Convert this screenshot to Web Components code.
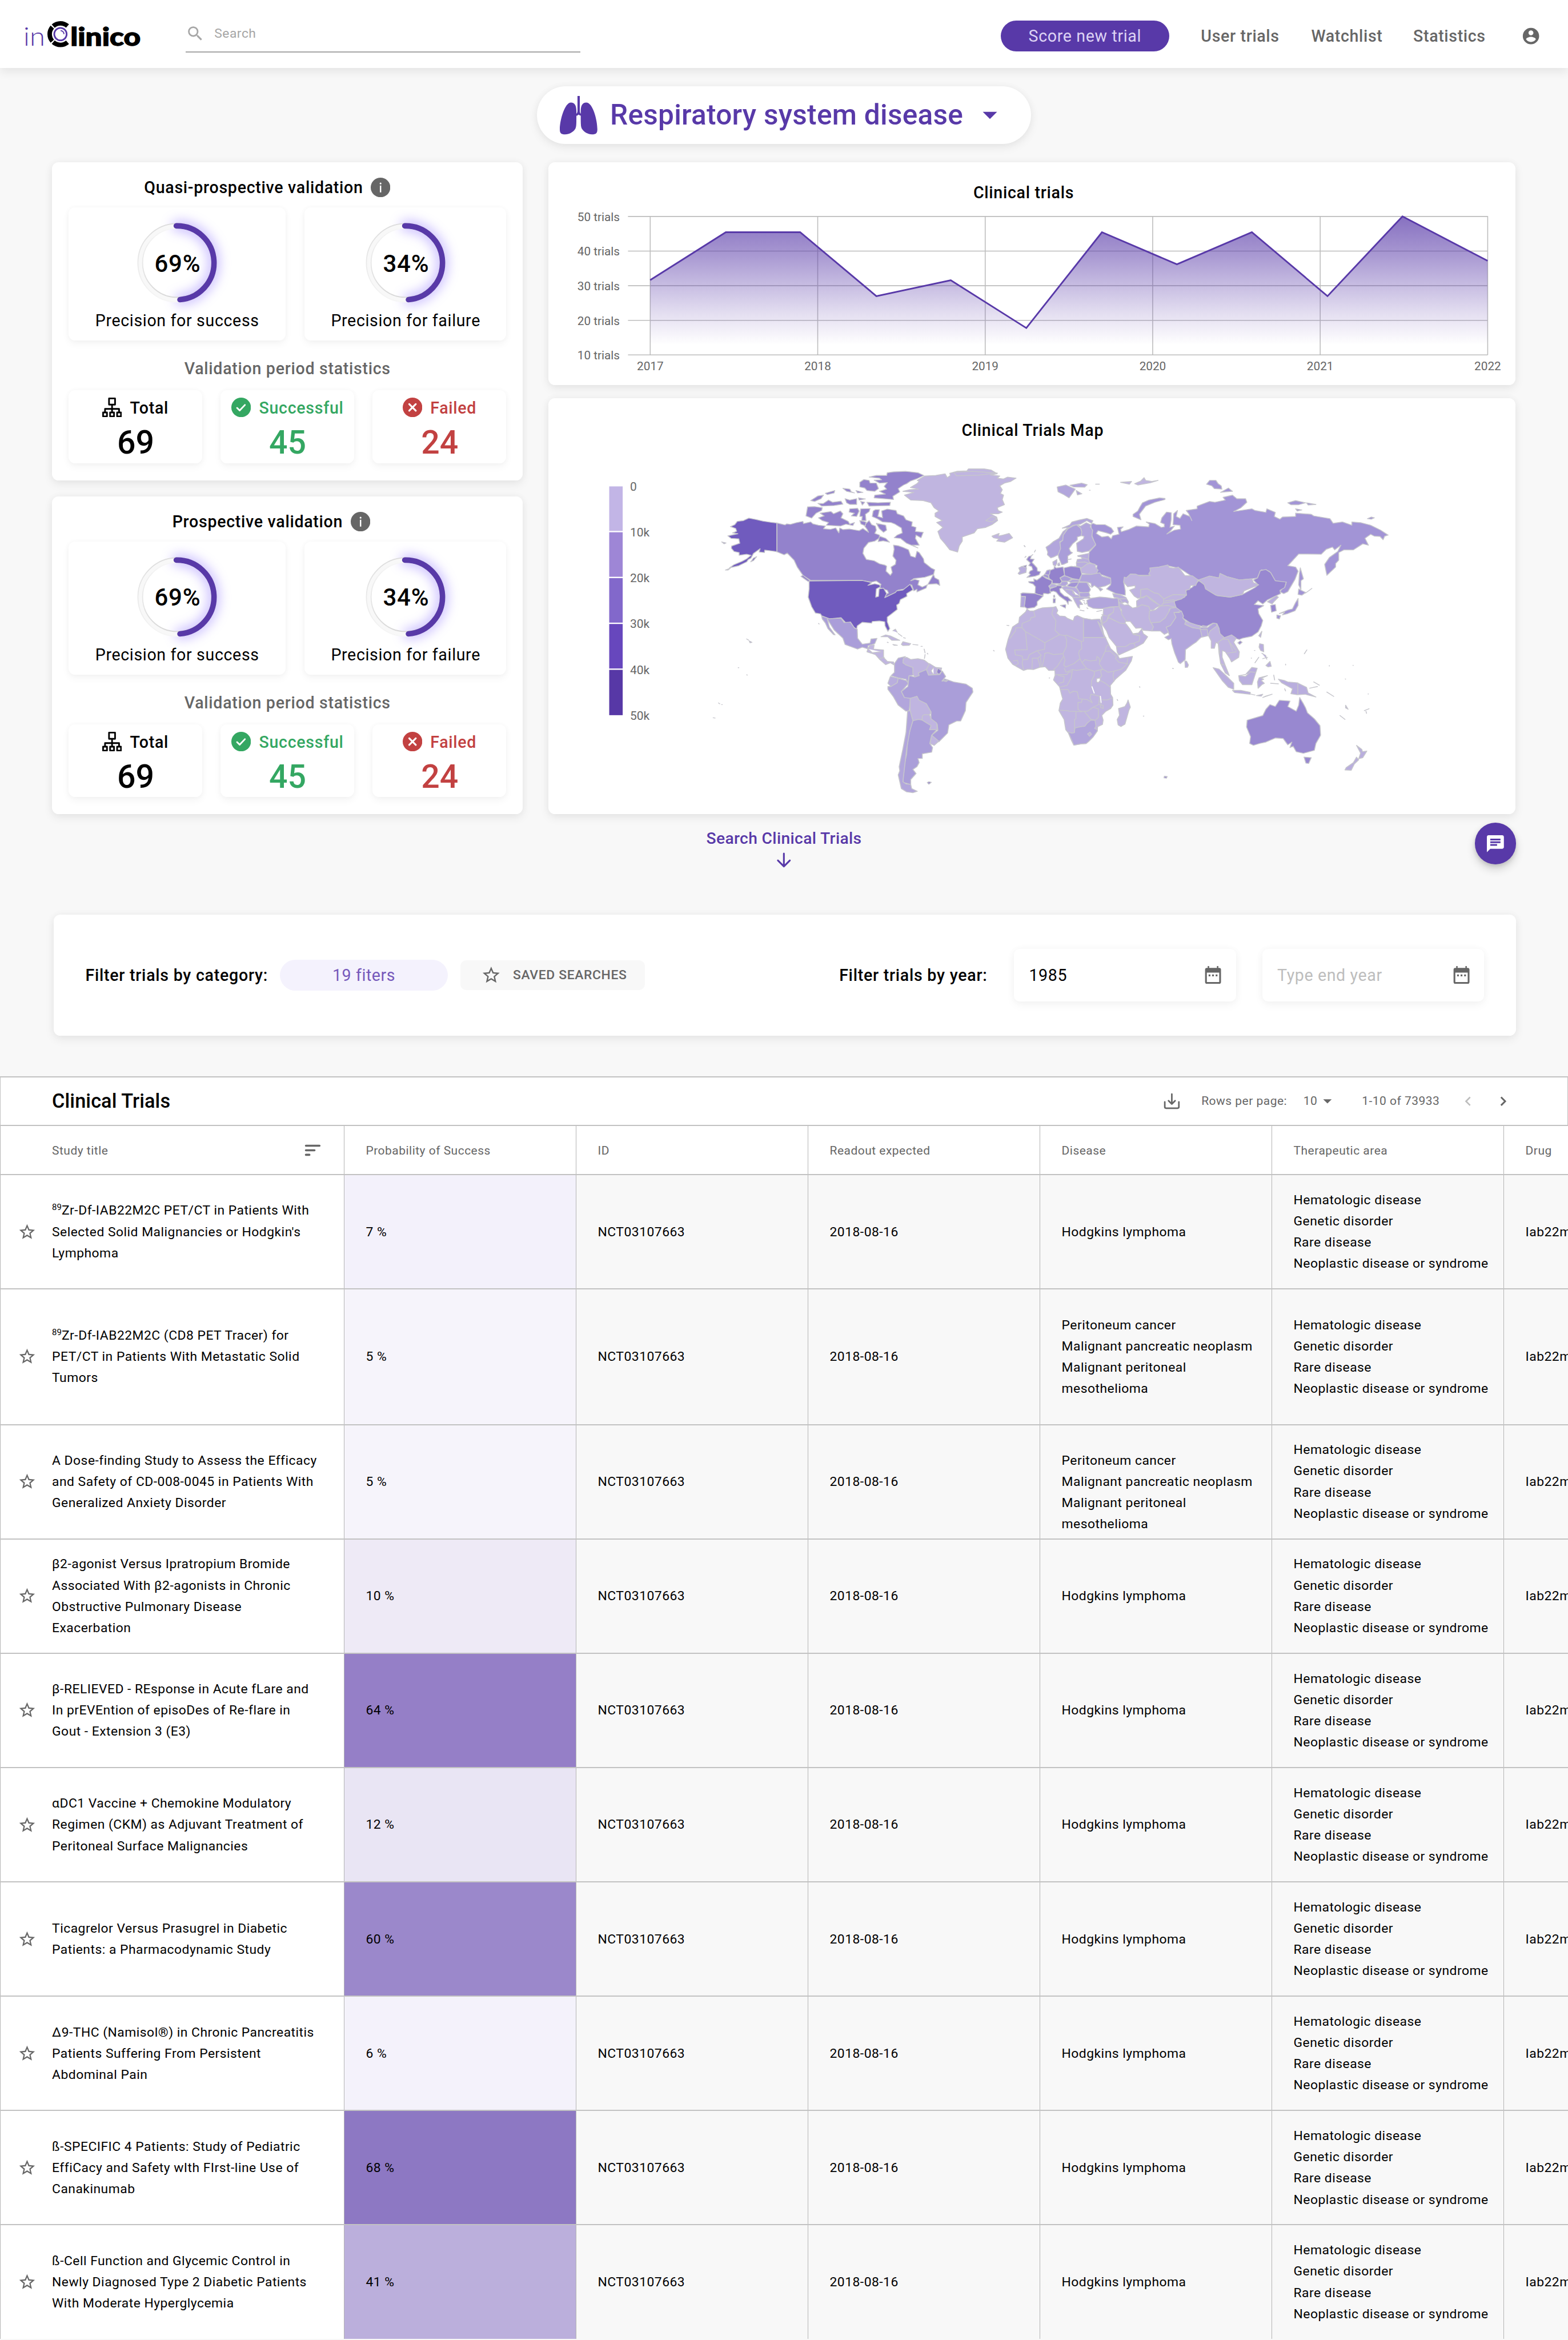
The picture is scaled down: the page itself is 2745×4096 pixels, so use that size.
<!DOCTYPE html>
<html lang="en">
<head>
<meta charset="utf-8">
<title>inClinico</title>
<style>
html{margin:0;height:100%;overflow:hidden;background:#f8f8f8}
body{margin:0;width:3840px;zoom:.71484;font-family:Roboto,"Liberation Sans",sans-serif;color:#000;overflow:hidden}
</style>
</head>
<body>
<inclinico-app></inclinico-app>
<script>
const define = (name, css, render) => customElements.define(name, class extends HTMLElement {
  connectedCallback() {
    if (this.shadowRoot) return;
    const root = this.attachShadow({ mode: 'open' });
    root.innerHTML = `<style>*{box-sizing:border-box}svg{display:block}:host{display:block;box-sizing:border-box}${css}</style>` + render(this);
  }
});
const SHADOW = '0 8px 24px rgba(0,0,0,.07),0 0 20px rgba(0,0,0,.035)';

/* ---------- icons ---------- */
const ICONS = {
  search: '<path d="M15.5 14h-.79l-.28-.27A6.47 6.47 0 0 0 16 9.5 6.5 6.5 0 1 0 9.5 16c1.61 0 3.09-.59 4.23-1.57l.27.28v.79l5 4.99L20.49 19l-4.99-5zm-6 0C7.01 14 5 11.99 5 9.5S7.01 5 9.5 5 14 7.01 14 9.5 11.99 14 9.5 14z"/>',
  account: '<path d="M12 2C6.48 2 2 6.48 2 12s4.48 10 10 10 10-4.48 10-10S17.52 2 12 2zm0 3c1.66 0 3 1.34 3 3s-1.34 3-3 3-3-1.34-3-3 1.34-3 3-3zm0 14.2a7.2 7.2 0 0 1-6-3.22c.03-1.99 4-3.08 6-3.08 1.99 0 5.97 1.09 6 3.08a7.2 7.2 0 0 1-6 3.22z"/>',
  info: '<circle cx="12" cy="12" r="12"/><path fill="#fff" d="M11.2 9.7h1.7V18h-1.7zM12.05 6a1.1 1.1 0 1 1 0 2.2 1.1 1.1 0 0 1 0-2.2z"/>',
  check: '<circle cx="12" cy="12" r="12"/><path fill="none" stroke="#fff" stroke-width="2" stroke-linecap="round" stroke-linejoin="round" d="M7 12.6l3.2 3.2 6.4-6.8"/>',
  cross: '<circle cx="12" cy="12" r="12"/><path fill="none" stroke="#fff" stroke-width="2.2" stroke-linecap="round" d="M8 8l8 8M16 8l-8 8"/>',
  tree: '<path fill="none" stroke="currentColor" stroke-width="2" stroke-linejoin="round" d="M8.3 1h7.4v7.6H8.3zM12 8.6V18M3.4 18v-4.2h17.2V18M1 18.2h4.8V23H1zM9.6 18.2h4.8V23H9.6zM18.2 18.2H23V23h-4.8z"/>',
  star: '<path d="M22 9.24l-7.19-.62L12 2 9.19 8.63 2 9.24l5.46 4.73L5.82 21 12 17.27 18.18 21l-1.63-7.03L22 9.24zM12 15.4l-3.76 2.27 1-4.28-3.32-2.88 4.38-.38L12 6.1l1.71 4.04 4.38.38-3.32 2.88 1 4.28L12 15.4z"/>',
  calendar: '<path fill-rule="evenodd" d="M19 4h-1V2h-1.6v2H7.6V2H6v2H5a2 2 0 0 0-2 2v14a2 2 0 0 0 2 2h14a2 2 0 0 0 2-2V6a2 2 0 0 0-2-2zm0 16H5V9.4h14zM7 11.5h2v2H7zM11 11.5h2v2h-2zM15 11.5h2v2h-2z"/>',
  chat: '<path d="M20 2H4c-1.1 0-2 .9-2 2v18l4-4h14c1.1 0 2-.9 2-2V4c0-1.1-.9-2-2-2zM6 6h12v2H6zm0 3.200h12v2H6zm0 3.200h8v2H6z"/>',
  drop: '<path d="M7 9.500l5 5 5-5z"/>',
  down: '<path fill="none" stroke="currentColor" stroke-width="1.900" stroke-linecap="round" stroke-linejoin="round" d="M12 5v14M5.500 12.500L12 19l6.500-6.500"/>',
  download: '<path fill="none" stroke="currentColor" stroke-width="2" stroke-linecap="round" stroke-linejoin="round" d="M12 3v12.500M7.800 11.500l4.200 4.200 4.200-4.200M3 13v6.400a1.600 1.600 0 0 0 1.600 1.600h14.800a1.600 1.600 0 0 0 1.600-1.600V13"/>',
  left: '<path fill="none" stroke="currentColor" stroke-width="2" d="M15 6.500L9.500 12l5.500 5.500"/>',
  right: '<path fill="none" stroke="currentColor" stroke-width="2.300" d="M9 6.500l5.500 5.500L9 17.500"/>',
  sort: '<path fill="none" stroke="currentColor" stroke-width="2.600" stroke-linecap="round" d="M3.300 6.200h17.400M3.300 12h11M3.300 17.800h4.500"/>'
};
define('ui-icon', ':host{flex:none;width:var(--s,48px);height:var(--s,48px)}svg{width:100%;height:100%;fill:currentColor}',
  el => `<svg viewBox="0 0 24 24">${ICONS[el.getAttribute('name')]}</svg>`);

/* ---------- header ---------- */
define('brand-logo', ':host{width:300px;height:90px}svg{width:300px;height:90px;overflow:visible}text{font-family:Lato,sans-serif}', () => {
  const p = (r, a) => [(97.7 + r * Math.cos(a * Math.PI / 180)).toFixed(2), (43 + r * Math.sin(a * Math.PI / 180)).toFixed(2)];
  const arc = (r, a, b) => `M${p(r, a)}A${r},${r} 0 0 1 ${p(r, b)}`;
  return `<svg viewBox="0 0 300 90"><g fill="none">
  <path stroke="#000" stroke-width="11" d="${arc(26.4, -132, -49)}${arc(26.4, 139, 221)}${arc(26.4, 49, 132)}"/>
  <circle cx="97.700" cy="43" r="15.200" stroke="#5839a8" stroke-width="4"/><path stroke="#5839a8" stroke-width="2.600" d="${arc(8.6, -88, 0)}"/></g>
  <text x="7" y="71" font-size="62" font-weight="300" fill="#5839a8" textLength="53" lengthAdjust="spacingAndGlyphs">in</text>
  <text x="122" y="71" font-size="60" font-weight="900" fill="#000" stroke="#000" stroke-width="1.800" textLength="172" lengthAdjust="spacingAndGlyphs">linico</text></svg>`;
});
define('app-header', `:host{height:166px;background:#fff;box-shadow:0 10px 22px rgba(0,0,0,.08);position:relative;padding:0 67px 0 50px;display:flex;align-items:flex-start}
brand-logo{margin-top:40px}
.search{display:flex;width:967px;height:89px;margin:40px 0 0 104px;border-bottom:3px solid #a6a6a6;color:#a6a6a6;font-size:32px;letter-spacing:.7px;gap:24px;padding:19px 0 0 0}
.search ui-icon{--s:47px}.search span{line-height:47px}
nav{margin-left:auto;display:flex;align-items:center;height:76px;margin-top:50px;font-size:40px;font-weight:500;letter-spacing:.9px;color:#666}
.cta{width:412px;height:76px;border-radius:38px;background:#5839a8;color:#ddd3f4;font-weight:400;display:flex;align-items:center;justify-content:center;margin-right:78px}
a{margin-right:78px}a.w{margin-right:75px}ui-icon{--s:48px}nav ui-icon{margin-left:9px}`, () => `
<brand-logo></brand-logo><div class="search"><ui-icon name="search"></ui-icon><span>Search</span></div>
<nav><div class="cta">Score new trial</div><a>User trials</a><a class="w">Watchlist</a><a>Statistics</a><ui-icon name="account"></ui-icon></nav>`);

define('disease-select', `:host{display:flex;align-items:center;width:1210px;height:142px;border-radius:71px;background:#fff;box-shadow:${SHADOW};margin:45px auto;color:#5839a8;font-size:69.33px;font-weight:500;letter-spacing:.4px;padding-left:56px}
.l{width:92px;height:94px;margin-top:1px}.d{--s:84px;margin-left:23px}span{margin-left:31px;line-height:80px;white-space:nowrap}`,
  () => `<svg class="l" width="92" height="94" viewBox="33 45 276 282" fill="#5839a8"><path d="M163 45h17v112q0 12 7 19v-20c0-40 12-63 40-63 50 0 82 130 82 196 0 28-8 38-40 38-28 0-60-18-74-42-8-15-8-35-8-95q-10-3-16-9-6 7-16 10c0 60 0 80-8 95-14 24-46 41-74 41-32 0-40-10-40-38 0-66 36-196 82-196 28 0 40 23 40 63v20q8-7 8-19z"/></svg><span><slot></slot></span><ui-icon class="d" name="drop"></ui-icon>`);

/* ---------- validation cards ---------- */
define('gauge-ring', `:host{width:196px;height:196px;display:grid;place-items:center;font-size:58.67px;font-weight:500;letter-spacing:1px}
svg,span{grid-area:1/1}span{padding:2px 0 0 3px}svg{width:196px;height:196px;overflow:visible}`, el => `
<svg viewBox="-98 -98 196 196" fill="none"><defs><linearGradient id="o" x1="0" y1="0" x2="0" y2="1"><stop offset="0" stop-color="#dcdcdc"/><stop offset="1" stop-color="#f6f6f6"/></linearGradient><linearGradient id="i" x1="0" y1="0" x2="0" y2="1"><stop offset="0" stop-color="#f6f6f6"/><stop offset="1" stop-color="#d8d8d8"/></linearGradient>
<filter id="b" x="-50%" y="-50%" width="200%" height="200%"><feGaussianBlur stdDeviation="14"/></filter></defs>
<path d="M0-90.500A90.500 90.500 0 0 1 7 90.200" stroke="#b5a4ff" stroke-width="26" stroke-linecap="round" filter="url(#b)" opacity=".75"/>
<circle r="90.500" stroke="#f8f8f8" stroke-width="12"/><circle r="96" stroke="url(#o)" stroke-width="2.500"/><circle r="84.500" stroke="url(#i)" stroke-width="2.500"/>
<path d="M-2-90.500A90.500 90.500 0 0 1 7 90.200" stroke="#5839a8" stroke-width="13.400" stroke-linecap="round"/></svg><span>${el.getAttribute('value')}</span>`);
define('precision-tile', `:host{height:326px;border-radius:16px;background:#fff;box-shadow:0 8px 20px rgba(0,0,0,.045),0 0 14px rgba(0,0,0,.03);display:flex;flex-direction:column;align-items:center;padding-top:38px;font-size:40px;letter-spacing:.9px}
p{margin:13.500px 0 0 1px;line-height:60px}`, el => `<gauge-ring value="${el.getAttribute('value')}"></gauge-ring><p><slot></slot></p>`);
define('stat-tile', `:host{height:178px;flex:1;border-radius:16px;background:#fff;box-shadow:0 8px 20px rgba(0,0,0,.045),0 0 14px rgba(0,0,0,.03);display:flex;flex-direction:column;align-items:center;padding-top:18px;font-weight:500}
.r{display:flex;gap:20px;align-items:center;height:48px;font-size:40px;letter-spacing:1px}.r span{padding-top:1.500px}.n{margin:14.500px 0 0 1px;font-size:80px;line-height:94px}`, el => `
<div class="r"><ui-icon name="${el.getAttribute('icon')}"></ui-icon><span><slot></slot></span></div><div class="n">${el.getAttribute('value')}</div>`);
define('validation-card', `:host{height:778px;background:#fff;border-radius:16px;box-shadow:${SHADOW};padding:0 40px}
h2{margin:0 0 0 var(--in);padding-top:37px;height:110px;display:flex;font-size:40px;font-weight:500;letter-spacing:1px;gap:19px;line-height:48px;white-space:nowrap}h2 ui-icon{color:#666}
.g{display:grid;grid-template-columns:531px 494px;justify-content:space-between}
h3{margin:39.500px 0 22.500px;text-align:center;font-size:40px;line-height:60px;font-weight:500;letter-spacing:1px;color:#666}
.s{display:flex;gap:45px}.ok{color:#34a762}.no{color:#c24141}`, () => `
<h2><slot></slot><ui-icon name="info"></ui-icon></h2>
<div class="g"><precision-tile value="69%">Precision for success</precision-tile><precision-tile value="34%">Precision for failure</precision-tile></div>
<h3>Validation period statistics</h3>
<div class="s"><stat-tile icon="tree" value="69">Total</stat-tile><stat-tile class="ok" icon="check" value="45">Successful</stat-tile><stat-tile class="no" icon="cross" value="24">Failed</stat-tile></div>`);

/* ---------- area chart ---------- */
define('trials-chart', `:host{height:545px;background:#fff;border-radius:16px;box-shadow:${SHADOW}}svg{width:2369px;height:545px;font-size:29px;fill:#666}`, () => {
  const pts = '1592.3,686.5 1777.5,569.4 1959.6,569.4 2146.3,725.9 2328.4,686.9 2513.5,804 2698.7,569.4 2882.3,647.9 3065.9,569.4 3251.1,725.9 3434.7,530.7 3643.2,639.4';
  let g = '', t = '';
  for (let i = 0; i < 5; i++) { const y = 530.7 + i * 84.8; g += `M1538,${y}H3643`; t += `<text x="1414" y="${y + 11}">${50 - i * 10} trials</text>`; }
  for (let i = 0; i < 6; i++) { const x = 1592.4 + i * 410.2; g += `M${x},530V870`; t += `<text text-anchor="middle" x="${x}" y="907.500">${2017 + i}</text>`; }
  return `<svg viewBox="1343 398 2369 545"><defs><linearGradient id="f" gradientUnits="userSpaceOnUse" x1="0" y1="530" x2="0" y2="845"><stop offset="0" stop-color="#5839a8" stop-opacity=".72"/><stop offset=".3" stop-color="#5839a8" stop-opacity=".52"/><stop offset=".75" stop-color="#5839a8" stop-opacity=".17"/><stop offset="1" stop-color="#5839a8" stop-opacity="0"/></linearGradient></defs>
  <path d="${g}" stroke="#bdbdbd" stroke-width="2.200"/><path fill="url(#f)" d="M${pts} 3643.2,869 1592.3,869Z"/>
  <polyline points="${pts}" fill="none" stroke="#5839a8" stroke-width="4"/>
  <text x="2507" y="485.500" text-anchor="middle" font-size="40" font-weight="500" fill="#000" letter-spacing="1">Clinical trials</text>${t}</svg>`;
});

/* ---------- world map ---------- */
const C = { a: '#c0b5e0', b: '#b9aede', c: '#b2a6dc', d: '#aa9ed9', e: '#a294d6', f: '#9888d0', g: '#9382cc', u: '#705bbe' };
const WEST = [
 ['u','M657,464L636,461 612,457 590,451 567,446 550,455 530,458 522,470 508,477 525,484 528,494 515,500 532,503 500,511 510,520 535,522 538,538 512,548 511,556 520,568 536,572 536,582 560,578 574,582 560,595 545,604 520,616 505,628 535,620 560,606 565,598 574,592 582,575 603,558 600,570 617,572 618,563 640,566 657,569Z M582,592l10,-5 -10,14 -9,5Z M480,533l14,4 -6,3Z M492,636l16,-7 -8,7Z'],
 ['g','M657,464L683,471 688,467 700,469 718,463 740,458 742,466 765,460 772,467 790,472 812,475 806,485 828,487 845,482 855,500 858,482 868,488 890,486 920,492 932,484 950,498 946,488 936,472 952,455 960,470 972,475 975,490 970,502 985,508 986,518 970,530 950,535 935,556 932,575 943,597 968,602 985,613 1003,618 1008,622 1006,640 1020,655 1026,645 1022,625 1036,615 1038,600 1028,585 1032,560 1030,545 1045,547 1060,553 1078,562 1085,585 1100,590 1105,567 1112,572 1126,595 1128,608 1150,628 1162,635 1158,652 1130,662 1095,667 1085,675 1098,670 1112,674 1108,690 1122,698 1138,690 1134,702 1105,716 1105,706 1095,712 1088,690 1072,704 1045,709 1036,718 1002,737 1000,728 1014,720 1010,710 985,700 990,688 975,676 960,680 930,674 765,674 740,655 722,625 712,600 690,574 680,580 657,569Z M1158,652L1140,688 1168,686 1178,692 1175,672 1162,664Z M740,655l28,24 -12,-2 -22,-18Z'],
 ['g','M755,405L778,404 802,408 800,418 782,428 768,446 750,438Z M795,428L830,422 838,430 860,420 868,430 862,445 885,458 890,468 905,462 900,473 878,468 860,475 815,472 822,462 802,455 790,445 808,438Z'],
 ['g','M965,420L972,415 985,415 980,440 995,445 992,420 1010,413 1038,418 1042,430 1062,438 1070,452 1090,460 1088,475 1102,480 1100,495 1125,498 1118,518 1102,508 1100,520 1112,545 1090,545 1108,555 1072,538 1052,520 1032,518 1042,508 1058,500 1055,482 1035,468 1022,462 995,460 978,448 962,440Z'],
 ['g','M890,412L915,410 920,420 912,440 895,438 905,428 888,424Z M925,412L955,411 952,422 940,432 942,455 928,455 930,440 922,440Z M945,388L980,390 1020,388 1018,400 952,402Z M985,512l20,8 12,14 -20,-5 -16,3Z M975,465L1005,472 1008,490 998,498 985,485Z M922,455l20,5 -2,14 -14,-6Z'],
 ['g','M1127,290L1108,280 1070,275 1030,277 1010,280 1008,290 975,290 952,296 985,300 992,306 968,307 985,318 1010,316 1000,330 1008,340 985,348 1004,358 970,362 968,372 1030,378 1028,366 1050,350 1045,338 1062,325 1072,320 1085,310 1105,302Z M922,315L935,305 952,308 955,318 975,318 982,338 970,348 945,345 938,336 922,332Z'],
 ['g','M765,382L788,365 806,362 798,375 778,385Z M812,355L842,345 840,354 818,360Z M868,337L890,340 895,350 905,354 880,348Z M788,392L805,393 822,380 835,388 862,384 868,395 840,400 800,402Z M875,375L890,380 912,375 912,396 890,396 880,390Z M910,345L932,352 915,354Z M918,372L940,376 920,380Z M925,385L938,388 930,398Z'],
 ['a','M1060,348L1082,342 1110,340 1084,334 1105,320 1112,312 1106,308 1130,292 1165,290 1195,284 1202,298 1212,290 1210,282 1232,275 1265,273 1270,266 1320,266 1342,270 1362,284 1340,288 1370,292 1362,300 1382,303 1395,296 1422,300 1405,312 1385,318 1370,328 1378,342 1372,356 1382,362 1378,378 1385,397 1362,408 1365,418 1378,424 1365,430 1340,430 1360,442 1363,455 1345,470 1325,480 1298,485 1288,500 1250,515 1250,530 1240,548 1235,570 1210,562 1195,540 1180,520 1172,495 1188,480 1168,462 1186,455 1163,440 1163,428 1175,420 1160,408 1150,390 1125,382 1085,380 1065,362 1095,352Z M1222,278l60,-3 80,6 -60,8 -70,2Z M1325,455l20,-15 16,8 -15,12Z'],
 ['a','M1345,512L1368,502 1365,512 1380,508 1400,502 1411,518 1385,534 1360,530 1368,522 1350,518Z'],
 ['u','M760,676L930,674 960,682 948,692 970,686 985,690 988,697 975,705 973,735 982,732 984,705 998,702 1008,722 1002,737 1036,718 1040,712 1060,709 1083,688 1092,708 1072,722 1073,732 1052,744 1048,758 1040,764 1042,780 1025,795 1010,808 1010,825 1018,850 1012,860 1003,840 1002,825 985,822 962,824 960,830 930,827 914,840 912,852 903,845 892,826 880,832 862,810 825,814 800,803 796,796 780,793 768,770 757,735 760,705Z'],
 ['d','M800,804L825,814 862,812 872,828 892,826 905,848 914,852 915,885 930,907 955,903 958,888 977,886 970,905 948,913 948,924 930,918 915,925 875,908 868,885 840,855 818,815 825,845 843,873 838,872 820,850 812,830 802,815Z'],
 ['a','M948,924L955,910 968,910 966,925 998,928 998,955 1010,970 1030,972 1032,983 1020,975 1005,982 985,962 972,945 945,935Z M948,924L962,938 990,935 M985,960L1000,955'],
 ['a','M990,880L1005,873 1020,877 1050,893 1025,893 1012,880Z M1055,908L1060,898 1085,905 1080,911 1060,912Z M1028,908l14,3 -10,0Z M1092,908l16,2Z M1028,858l8,-6 6,12M1045,868l12,10M1062,883l6,2M1118,915l4,0M1128,925l3,14M1131,945l-2,14M1138,940l2,3'],
 ['c','M1033,978L1045,958 1068,952 1060,965 1070,983 1092,992 1096,1020 1080,1022 1076,1050 1070,1035 1045,1030 1022,1022 1033,1010Z'],
 ['a','M1062,958L1072,955 1085,963 1108,960 1128,965 1145,980 1135,1000 1110,1012 1112,1022 1098,1027 1092,1015 1092,992 1070,983 1060,975Z M1145,978L1165,992 1184,994 1178,1018 1160,1018 1142,1020 1135,1000Z M1158,992l-8,12 8,15'],
 ['g','M1172,994L1184,1005 1176,1018 1168,1010Z'],
 ['b','M1020,1025L1045,1032 1042,1048 1022,1062 1012,1050Z'],
 ['c','M1045,1032L1070,1040 1078,1050 1055,1080 1065,1102 1085,1105 1080,1150 1070,1152 1045,1130 1030,1100 1012,1072 1012,1062 1022,1062 1042,1048Z'],
 ['d','M1080,1022L1098,1027 1112,1022 1110,1012 1135,1000 1142,1020 1178,1018 1186,1005 1197,1025 1185,1042 1205,1038 1222,1045 1262,1053 1282,1068 1284,1082 1262,1120 1260,1150 1245,1188 1232,1188 1207,1202 1203,1232 1175,1264 1152,1240 1172,1222 1170,1200 1150,1180 1150,1155 1135,1125 1110,1112 1105,1098 1085,1105 1065,1102 1055,1080 1076,1062Z M1188,1040l6,-6 12,4 -8,6Z'],
 ['a','M1083,1105L1105,1098 1112,1112 1135,1125 1150,1155 1145,1165 1128,1165 1120,1185 1092,1187 1083,1150Z'],
 ['a','M1122,1170L1128,1165 1145,1165 1150,1180 1168,1195 1170,1220 1145,1220 1150,1205 1122,1185Z M1152,1240L1175,1262 1160,1277 1147,1270Z'],
 ['d','M1092,1187L1110,1182 1122,1185 1150,1205 1145,1220 1168,1220 1152,1240 1146,1270 1155,1285 1152,1302 1122,1308 1122,1325 1108,1325 1112,1340 1105,1355 1092,1365 1102,1380 1085,1402 1085,1420 1060,1412 1062,1360 1072,1310 1075,1260 1085,1210Z'],
 ['c','M1075,1152L1083,1150 1092,1187 1082,1225 1072,1290 1068,1330 1060,1410 1070,1418 1085,1420 1088,1435 1106,1445 1092,1450 1072,1447 1055,1435 1045,1385 1050,1370 1048,1355 1060,1290 1070,1230Z'],
 ['g','M1138,1413l5,-3 8,2 -8,7Z M568,895l9,5 -6,2Z'],
 ['a','M560,888l6,4 M470,1122l4,3 M480,1128l2,0 M453,1176l6,1 M533,993l2,0 M560,1019l2,1 M1393,838l6,1 M1350,930l2,2 M1448,547l3,3 M790,831l2,2 M1010,900l3,1']
];
const EAST = [
 ['e','M362,465L372,470 400,470 420,482 428,495 418,505 405,500 378,492 372,502 390,515 410,512 420,522 425,510 445,505 440,480 458,478 450,487 452,496 475,488 500,475 540,478 542,468 532,460 560,466 580,480 590,478 590,468 578,462 582,445 597,424 612,426 612,450 608,480 622,475 612,490 598,504 622,490 642,486 640,472 618,470 620,430 632,418 628,440 640,447 650,430 672,440 678,455 668,430 660,418 695,412 695,402 735,385 752,388 785,380 778,370 808,362 822,375 850,375 854,388 835,408 812,422 870,412 880,418 915,425 918,412 945,425 942,440 960,450 968,442 1010,440 1010,428 1060,432 1068,438 1120,448 1130,465 1160,460 1190,472 1190,460 1220,463 1250,472 1282,490 1306,508 1295,512 1290,525 1280,513 1262,512 1250,505 1232,520 1243,545 1225,540 1195,562 1165,562 1148,572 1148,600 1138,612 1138,625 1110,655 1103,615 1118,590 1145,568 1155,545 1135,562 1128,552 1108,560 1092,578 1020,577 985,620 1010,625 1018,640 1008,670 985,715 972,722 960,715 978,690 980,680 955,680 940,672 925,640 900,635 888,665 870,668 830,672 790,660 770,650 765,665 735,658 700,672 690,668 640,630 600,620 545,632 545,655 480,655 460,680 465,712 465,728 435,722 405,705 418,690 418,665 370,645 375,620 345,605 350,570 370,545 358,510 355,470Z'],
 ['e','M592,374L575,372 540,380 520,390 512,405 505,420 490,432 490,440 515,452 510,432 530,402 560,388 592,378Z M725,322L735,308 755,308 762,320 772,328 774,340 750,338 742,328Z M770,352L795,336 808,348 785,350Z M985,390L1000,385 1010,382 1042,390 1020,397 995,397Z M1045,390L1075,396 1050,398Z M1010,412L1030,416 1015,420Z M1240,448l12,-6 10,3 -10,5Z M1025,628L1035,668 1027,675 1027,708 1020,690 1022,650Z'],
 ['a','M450,315L485,312 478,322Z M495,320L515,310 525,298 530,308 550,312 570,308 545,317 505,325Z'],
 ['c','M247,332L275,325 295,335 305,340 285,372 268,360 250,350Z M288,326L325,318 343,324 335,333 300,332Z M308,345l18,12 -14,4Z M370,322l12,0 M350,344l3,0'],
 ['e','M1020,705L1028,710 1042,718 1030,728 1018,725Z M1018,740L1018,765 1008,785 985,795 968,800 975,790 958,795 985,782 1000,778 1010,755Z M950,800L962,803 958,815 950,812Z'],
 ['b','M1042,720L1062,703M920,752L948,730 955,735 942,750 935,760Z'],
 ['f','M930,765L945,762 948,785 933,790Z'],
 ['f','M622,750L655,735 660,710 678,700 700,675 720,690 725,705 760,730 800,735 840,725 880,700 890,690 875,672 888,665 897,638 915,634 930,645 945,675 980,680 975,700 960,710 962,722 920,745 905,760 890,748 878,762 908,766 890,778 892,795 905,820 900,840 890,862 870,878 840,885 830,890 815,885 805,875 782,883 765,870 765,850 758,832 745,830 720,845 700,838 680,835 650,812 648,795 632,782 622,762Z M825,902l8,-7 6,5 -8,8Z'],
 ['a','M700,672L735,658 765,665 768,648 790,660 830,672 870,668 875,682 892,690 845,712 840,725 800,735 755,728 722,705 718,690Z'],
 ['b','M892,876L902,860 898,882Z'],
 ['a','M725,862L735,840 745,832 758,832 765,850 768,868 782,883 762,900 768,940 762,905 755,900 750,922 740,922 740,895Z M762,900L778,888 785,882 805,873 820,885 812,900 830,935 828,955 805,972 800,960 785,935 775,930 775,955 785,985 798,1022 785,1012 770,978 765,940Z M778,888L795,890 808,930 M790,940L820,935 M795,895L820,930 M770,978L785,985'],
 ['b','M746,993L765,998 790,1025 812,1050 812,1072 795,1065 775,1040Z M808,1076L835,1076 865,1083 865,1090 815,1084Z M868,1090L880,1093 M885,1095L905,1090 900,1097Z M905,1102L935,1090 912,1098Z M828,1022L850,1018 870,992 887,995 880,1020 870,1055 840,1055 830,1040Z M828,1022L850,1025 865,1008 880,1010 M890,1068L888,1045 893,1030 920,1022 900,1032 908,1035 900,1040 910,1050 902,1055Z M940,1020l3,18 M930,1050l25,2 M955,1035L975,1040 985,1045 1015,1048 1045,1065 1050,1085 1075,1100 1040,1090 1015,1092 995,1088 1000,1070 965,1048Z M1017,1048V1092 M1055,1068L1080,1062 M1068,1045l18,12 M975,1070l3,8'],
 ['b','M895,905L907,908 908,935 898,930 893,918Z M902,940l12,8 4,14 M905,960l15,-5 M915,985L928,970 932,988 922,990Z M880,975L892,955 M1110,1082L1132,1098 M1170,1130L1178,1145 1170,1140Z M1152,1168L1168,1182 M1230,1150L1245,1143 M1235,1152l2,8 M1038,942l8,-14 M978,980l0,3 M1118,985l0,2 M1194,984l0,1 M1169,1034l1,1 M1242,1089l1,0 M868,958l1,0 M878,930l2,0'],
 ['f','M855,1185L905,1168 915,1145 928,1128 945,1135 958,1112 992,1115 985,1135 1012,1152 1020,1130 1023,1102 1035,1125 1042,1140 1048,1158 1070,1180 1088,1205 1090,1240 1075,1270 1070,1295 1035,1306 1012,1300 1002,1280 992,1285 998,1265 985,1275 970,1252 945,1250 915,1265 895,1270 875,1277 863,1270 866,1245 853,1210Z M1037,1320L1060,1322 1052,1343 1043,1342Z M590,1390l9,1 -2,6 -8,-1Z'],
 ['b','M1205,1277L1222,1292 1224,1300 1238,1298 1225,1322 1212,1326 1218,1305Z M1205,1320L1212,1330 1198,1345 1188,1368 1168,1367 1172,1358 1195,1340Z']
];
const DETAIL = [
 ['a','M105,605L125,618 155,618 185,605 220,595 300,590 318,586 332,615 322,635 345,655 385,658 402,672 445,690 455,660 475,652 520,672 580,682 640,678 650,712 655,725 670,790 690,830 720,895 770,940 785,968 880,952 872,985 830,1055 760,1115 718,1165 720,1230 735,1255 737,1310 720,1335 685,1355 655,1385 665,1420 660,1452 625,1468 622,1500 590,1545 560,1575 540,1592 500,1595 450,1604 430,1565 410,1515 390,1490 378,1415 340,1350 350,1295 368,1265 358,1230 345,1175 300,1125 312,1090 310,1055 265,1055 240,1028 200,1032 155,1048 110,1045 80,1055 0,1010 -35,965 -52,900 -33,825 0,735 45,705 50,665 95,625Z'],
 ['b','M520,672L580,682 640,678 652,715 645,720 625,695 675,812 520,812Z'],
 ['c','M408,1508L435,1515 453,1512 458,1478 500,1468 530,1465 550,1440 575,1420 605,1422 612,1465 602,1480 622,1490 622,1500 590,1545 560,1575 540,1592 500,1595 450,1604Z'],
 ['a','M550,1522l18,-13 12,15 -15,14Z M848,1272L865,1325 855,1345 825,1450 795,1467 775,1455 768,1415 785,1385 778,1335 825,1320 840,1295Z'],
 ['g','M118,218L138,212 130,235 158,238 142,262 160,280 180,302 182,325 205,330 195,352 165,362 105,372 130,350 120,340 128,325 148,315 140,292 118,285 130,265 102,240Z M78,288L102,282 98,300 85,298Z'],
 ['b','M45,302L70,290 102,302 98,335 50,350 40,342 55,325Z M90,225l8,-8 M140,210l8,-6 M160,185l8,-14 M85,138l6,8'],
 ['c','M245,150L272,132 300,108 340,85 370,35 410,5 365,10 420,-15 435,-35 490,-50 545,-62 590,-45 580,-25 545,-45 500,-20 440,-10 405,12 372,60 368,100 345,110 355,160 335,205 300,222 280,228 255,205 258,185Z'],
 ['d','M372,60L405,15 440,-5 470,-15 500,5 508,40 505,65 475,75 475,95 440,125 415,160 425,182 440,190 405,215 405,262 375,275 360,278 338,225 335,205 352,160 348,115 368,100Z M410,240l20,-4'],
 ['c','M470,-15L500,-5 540,-30 575,-15 570,0 588,25 582,70 595,100 610,128 590,152 560,178 510,188 475,180 470,120 520,88 525,70 505,65 508,35 500,10Z'],
 ['b','M295,258L325,240 325,268 315,288 298,280Z M330,275l12,-12 6,20 -14,4Z'],
 ['b','M478,212L560,195 558,235 565,265 540,278 515,305 470,290 468,265 475,240 510,235 505,222 480,218Z M505,225L555,238 M468,262L530,258 562,270 M455,290L490,295'],
 ['a','M562,268L605,275 610,300 628,318 612,345 575,350 502,338 502,305 540,278Z'],
 ['f','M378,302L430,290 495,298 508,350 490,388 440,380 400,365 380,358Z'],
 ['g','M305,290L320,302 370,295 382,355 348,375 362,402 348,418 292,415 290,395 268,380 265,355 275,320 305,308Z'],
 ['e','M238,345L252,320 275,315 272,345 262,358 268,380 222,362Z M240,350L262,355'],
 ['g','M118,402L158,402 155,382 178,392 205,372 218,360 245,378 290,395 285,420 265,435 278,458 280,485 262,492 228,488 222,505 190,498 165,488 168,440 150,420 120,410Z M300,505l8,-3 2,15 -8,2Z'],
 ['g','M60,490L75,485 165,490 190,498 225,508 180,550 180,575 160,592 105,600 85,585 92,512 62,510Z'],
 ['c','M62,512L95,512 85,590 58,588Z'],
 ['g','M275,455L300,445 330,430 360,435 362,448 345,455 350,480 380,508 405,515 435,545 410,545 408,570 395,545 345,510 320,480 300,472 275,478Z M350,577L390,572 388,597Z M298,528L315,528 312,558 298,558Z'],
 ['b','M270,438L285,418 320,425 320,440 295,445 275,450Z'],
 ['c','M320,428L352,420 362,402 400,400 405,418 385,435 325,432Z'],
 ['d','M348,375L380,360 400,365 435,382 410,400 362,398Z'],
 ['c','M412,402L440,385 490,390 485,405 430,410Z'],
 ['e','M402,430L430,410 485,405 478,428 455,445 410,440Z'],
 ['b','M360,445L385,435 410,440 455,445 468,450 490,480 492,515 560,510 570,525 530,525 490,540 515,570 490,572 492,598 480,590 455,545 440,515 400,485Z M390,460L440,465 445,490 M440,465L460,500 490,505 M445,520L495,518'],
 ['d','M485,408L545,408 562,440 572,462 558,485 520,485 490,480 468,445Z'],
 ['c','M488,485L560,482 568,505 545,518 495,515Z'],
 ['c','M490,402L508,350 575,350 640,338 655,362 720,380 722,415 680,435 635,445 662,458 645,472 630,452 600,430 582,445 575,415 545,405Z M548,408l25,32'],
 ['c','M545,540L575,525 640,515 690,520 740,527 775,522 780,585 720,588 665,600 630,602 590,598 555,582 548,560Z'],
 ['b','M735,490L790,500 832,518 850,550 848,565 825,552 800,560 782,555 775,522 745,518Z M770,528L830,528 M785,530L810,560'],
 ['a','M668,598L745,590 740,625 700,662 690,695 655,712 650,680 665,640Z M745,590L782,585 805,640 832,690 825,712 790,708 705,665 700,650 740,628Z M655,645L690,655'],
 ['c','M652,660l6,0 0,45 -8,-30Z'],
 ['a','M655,712L690,692 705,668 790,708 832,712 865,755 885,790 935,800 930,840 890,855 860,860 830,880 762,878 740,850 710,815 690,765Z M762,878L830,880 860,860 890,855 905,885 780,942 768,920Z M885,785L925,780 948,750 960,785 992,808 960,855 905,885 890,855 930,840 935,800Z'],
 ['a','M785,555L820,575 850,572 880,597 915,590 950,572 1000,585 1010,610 1002,665 1015,700 1035,735 1022,765 960,760 945,742 905,745 865,695 835,695 800,640 802,610 782,585Z'],
 ['a','M912,590L910,545 945,520 985,505 1020,530 1085,580 1060,590 1030,612 1010,610 1000,585 950,572Z M940,520L940,460 1000,455 1040,485 1070,490 1110,528 1140,535 1110,580 1085,580 1020,540 985,505 960,522Z'],
 ['a','M815,405L820,370 835,375 865,347 905,348 935,360 1012,358 1000,345 1012,325 1008,302 1075,295 1140,280 1150,298 1185,305 1218,296 1265,358 1320,360 1362,390 1345,430 1308,430 1300,460 1272,465 1278,500 1180,498 1140,515 1112,530 1070,490 1040,485 990,455 940,460 940,520 920,525 895,510 860,465 900,450 900,432 845,440Z'],
 ['a','M1110,530L1180,498 1278,502 1240,530 1185,545 1200,590 1150,590 1088,582 1110,560Z M1120,545L1185,535 M1115,560L1185,548'],
 ['a','M1005,620L1050,610 1085,582 1140,578 1195,590 1150,605 1148,635 1120,670 1080,700 1015,705 1002,665Z'],
 ['b','M1018,705L1080,700 1120,670 1150,620 1160,598 1200,592 1240,622 1185,630 1200,665 1160,725 1130,738 1145,775 1115,790 1085,765 1022,765 1035,735Z'],
 ['c','M1185,630L1222,630 1240,618 1255,655 1250,670 1272,695 1265,715 1320,740 1375,750 1385,738 1430,742 1475,708 1498,712 1500,728 1450,765 1435,800 1420,795 1380,815 1350,845 1320,865 1270,902 1268,975 1232,1005 1218,995 1190,925 1170,860 1165,820 1145,830 1118,812 1150,795 1145,775 1128,738 1160,725 1200,665Z'],
 ['a','M1272,695L1320,710 1378,730 1378,750 1320,740 1265,715Z M1395,725L1430,732 1420,742 1398,742Z'],
 ['b','M1378,752L1395,755 1430,755 1435,800 1415,805 1392,810 1385,780Z M1265,985L1278,988 1292,1015 1285,1032 1268,1033Z'],
 ['a','M495,612l30,5 M618,622l38,-8 M268,1110l4,0 M768,1268l4,8 M932,1175l3,3 M960,1390l4,0 M1175,1040l6,1 M540,560l4,6 M515,540l15,5 M525,555l8,14 M545,595l8,6']
];
const BORDERS = 'M155,620L165,660 135,668 130,685 70,710 68,740 22,742 20,765 -20,820M68,740L95,770 107,903 15,905 20,940 70,950M95,770L215,838 235,852 345,792 312,762 318,690 288,640 300,592M345,792L385,800 395,795 505,842 520,840 520,672M520,812L685,812M238,852L235,900 180,910 122,940 110,975 75,975M180,910L210,945 185,965 145,965 142,1045M235,930L260,925 300,938 370,932 395,880 397,830 385,800M237,930L230,970 218,1025M185,965L195,1000 200,1030M205,960L210,1028M505,842L508,895 490,910 485,930 495,968 510,998M370,932L385,980 375,1015 390,1030 450,1005 495,968M375,950L330,1022 300,1050M380,1040L392,1068 440,1048 470,1055 545,1042M70,950L75,978 70,1000 80,1050M5,985L35,980 42,1005 20,1018M510,998L530,975 570,985 615,980 620,952 635,965 640,995 680,915 690,875 705,868M640,995L635,1005 662,1045 600,1062 545,1042 510,998M680,915L715,912 765,955 755,965 780,995 845,1005 800,1045 745,1060 700,1068 662,1045M845,965L840,1010M745,1060L738,1090 745,1135M662,1045L645,1060 655,1095 640,1110M600,1062L600,1090 580,1130 578,1170 600,1225M645,1130L680,1148 718,1178M440,1048L430,1110 400,1165 345,1178M312,1085L400,1085 410,1068 430,1065M335,1092L378,1100 375,1140 340,1150M350,1195L408,1195 420,1222 445,1208 475,1212 485,1262 550,1270 585,1292 568,1260 575,1230 640,1245 650,1270 695,1272 730,1258M510,1270L505,1290 480,1290 480,1340 500,1355 550,1355 592,1325 632,1305 640,1245M632,1305L665,1312 665,1335 645,1325 650,1295 640,1280M342,1348L395,1350 420,1355 510,1358M465,1360L465,1410 455,1415 455,1510M530,1360L575,1415 608,1420 630,1400 630,1338 592,1325';
define('trials-map', `:host{height:1018px;background:#fff;border-radius:16px;box-shadow:${SHADOW}}svg{width:2369px;height:1018px}`, () => {
  const draw = l => l.map(([c, d]) => `<path fill="${C[c]}" d="${d}"/>`).join('');
  const cols = ['#c2b5e6', '#9e86d6', '#8268cb', '#6747bd', '#5738a6'];
  const lg = cols.map((c, i) => `<rect x="1492" y="${1191 + i * 112.3}" width="33" height="${i == 4 ? 111 : 109}" fill="${c}"/>`).join('')
    + ['0', '10k', '20k', '30k', '40k', '50k'].map((t, i) => `<text x="1543" y="${1202 + i * 112}">${t}</text>`).join('');
  return `<svg viewBox="1343 975 2369 1018"><text x="2529" y="1068" text-anchor="middle" font-size="40" font-weight="500" letter-spacing="1">Clinical Trials Map</text>
  <g fill="#666" font-size="29.330">${lg}</g>
  <g stroke="#c6c6cc" stroke-width="2.900" stroke-linejoin="round" stroke-linecap="round"><g transform="translate(1400 970) scale(.76531 .66964)">${draw(WEST)}</g><g transform="translate(2400 970) scale(.76531 .66964)">${draw(EAST)}</g>
  <g stroke-width="6.300" transform="translate(2480 1290) scale(.33333)">${draw(DETAIL)}<path fill="none" d="${BORDERS}"/><path fill="#fff" d="M618,1115l25,-5 0,20 -15,15 -12,-8Z"/><path fill="none" stroke="#fff" stroke-width="7" d="M583,1175l16,45M645,1245l5,45"/></g></g></svg>`;
});

/* ---------- link row, filters ---------- */
define('search-link', `:host{height:246px;display:grid;grid-template-columns:1fr auto 1fr}
.c{grid-column:2;color:#5839a8;font-size:39.500px;font-weight:500;letter-spacing:.5px;line-height:46px;padding-top:38px;display:flex;flex-direction:column;align-items:center}.c ui-icon{--s:54px;margin-top:.500px}
.f{grid-column:3;justify-self:end;width:101px;height:101px;border-radius:50%;margin:21px 127px 0 0;background:#5839a8;color:#fff;display:grid;place-items:center;box-shadow:0 12px 22px rgba(0,0,0,.16),0 4px 10px rgba(0,0,0,.12)}.f ui-icon{--s:50px}`,
  () => `<div class="c"><span><slot></slot></span><ui-icon name="down"></ui-icon></div><div class="f"><ui-icon name="chat"></ui-icon></div>`);
define('year-field', `:host{width:544px;height:130px;border-radius:14px;background:#fff;box-shadow:0 8px 24px rgba(0,0,0,.045),0 0 20px rgba(0,0,0,.03);display:flex;align-items:center;justify-content:space-between;padding:0 30px 0 37px;font-size:40px;letter-spacing:.85px}
:host([empty]) span{color:#bdbdbd}span{padding-top:1.500px}ui-icon{--s:52px;color:#666}`, () => `<span><slot></slot></span><ui-icon name="calendar"></ui-icon>`);
define('filter-bar', `:host{height:296px;margin:0 128px 0 131px;background:#fff;border-radius:16px;box-shadow:${SHADOW};display:flex;align-items:center;padding:0 77px 0 78px;font-size:40px;letter-spacing:1.050px}
b{font-weight:500;white-space:nowrap}.n{width:412px;height:76px;border-radius:38px;background:#f4f2fd;color:#7659bb;display:grid;place-items:center;margin-left:29px;letter-spacing:.8px}
.s{width:452px;height:74px;border-radius:14px;background:#f8f8f8;color:#666;margin-left:30px;display:flex;align-items:center;padding-left:51px;gap:28px;font-size:32px;letter-spacing:.9px;font-weight:500}.s ui-icon{--s:50px}
.y{margin-left:auto;margin-right:65px}year-field+year-field{margin-left:64px}`, () => `
<b>Filter trials by category:</b><div class="n">19 fiters</div><div class="s"><ui-icon name="star"></ui-icon>SAVED SEARCHES</div>
<b class="y">Filter trials by year:</b><year-field>1985</year-field><year-field empty>Type end year</year-field>`);

/* ---------- table ---------- */
const LINE = '#c2c2c2', VLINE = '#b4b4b4';
define('table-toolbar', `:host{height:120px;background:#fff;border:3px solid ${LINE};border-width:3px 2px 0;display:flex;align-items:center;padding:0 135px 0 126px;color:#666;font-size:29.330px;letter-spacing:.700px;white-space:nowrap}
h2{margin:0 auto 0 0;font-size:48px;font-weight:500;letter-spacing:.1px;color:#000}.d{--s:46px;margin-right:50px}.t{--s:50px;margin:0 59px 0 0}.k{--s:44px}.p{color:#bdbdbd;margin:0 43px 0 47px}`, () => `
<h2>Clinical Trials</h2><ui-icon class="d" name="download"></ui-icon><span>Rows per page:</span><span style="margin-left:40px">10</span><ui-icon class="t" name="drop"></ui-icon><span>1-10 of 73933</span><ui-icon class="k p" name="left"></ui-icon><ui-icon class="k" name="right"></ui-icon>`);
const GRID = 'display:grid;grid-template-columns:843px repeat(5,568px) minmax(0,1fr);width:3840px;overflow:hidden;';
define('table-head', `:host{${GRID}height:120px;background:#fff;border-top:3px solid ${LINE};color:#666;font-size:29.330px;letter-spacing:.700px}
div{display:flex;align-items:center;padding:2px 0 0 53px;border-right:2px solid ${VLINE};white-space:nowrap}div:first-of-type{padding:2px 53px 0 126px;justify-content:space-between;border-left:2px solid ${VLINE}}div:last-of-type{border-right:0}ui-icon{--s:46px}`, () => `
<div>Study title<ui-icon name="sort"></ui-icon></div>` + ['Probability of Success', 'ID', 'Readout expected', 'Disease', 'Therapeutic area', 'Drug'].map(t => `<div>${t}</div>`).join(''));
define('trial-row', `:host{${GRID}height:280px;border-top:3px solid ${LINE};background:#f8f8f8;font-size:32px;letter-spacing:.68px;line-height:52px}
:host([tall]){height:332px}
div{display:flex;align-items:center;padding-left:53px;border-right:2px solid ${VLINE};white-space:nowrap;min-width:0}div:last-of-type{border-right:0;overflow:hidden}
.t{background:#fff;padding-left:42px;border-left:2px solid ${VLINE}}.t ui-icon{--s:46px;color:#666;margin-right:38px}
:host([low]) .d{padding-top:52px}`, el => {
  const area = 'Hematologic disease<br>Genetic disorder<br>Rare disease<br>Neoplastic disease or syndrome';
  const dis = el.hasAttribute('multi') ? 'Peritoneum cancer<br>Malignant pancreatic neoplasm<br>Malignant peritoneal<br>mesothelioma' : 'Hodgkins lymphoma';
  return `<div class="t"><ui-icon name="star"></ui-icon><span><slot></slot></span></div><div style="background:${el.getAttribute('tint')}">${el.getAttribute('p')} %</div><div>NCT03107663</div><div>2018-08-16</div><div class="d"><span>${dis}</span></div><div><span>${area}</span></div><div>Iab22m</div>`;
});
customElements.define('trials-table', class extends HTMLElement {
  connectedCallback() {
    const s = t => `<span class="sup">${t}</span>`;
    const rows = [
      ['7', '#f3f1fb', '', s('89') + "Zr-Df-IAB22M2C PET/CT in Patients With<br>Selected Solid Malignancies or Hodgkin's<br>Lymphoma"],
      ['5', '#f6f4fb', 'tall multi', s('89') + 'Zr-Df-IAB22M2C (CD8 PET Tracer) for<br>PET/CT in Patients With Metastatic Solid<br>Tumors'],
      ['5', '#f6f4fb', 'multi low', 'A Dose-finding Study to Assess the Efficacy<br>and Safety of CD-008-0045 in Patients With<br>Generalized Anxiety Disorder'],
      ['10', '#eeeaf6', '', 'β2-agonist Versus Ipratropium Bromide<br>Associated With β2-agonists in Chronic<br>Obstructive Pulmonary Disease<br>Exacerbation'],
      ['64', '#957fc7', '', 'β-RELIEVED - REsponse in Acute fLare and<br>In prEVEntion of episoDes of Re-flare in<br>Gout - Extension 3 (E3)'],
      ['12', '#e9e5f4', '', 'αDC1 Vaccine + Chemokine Modulatory<br>Regimen (CKM) as Adjuvant Treatment of<br>Peritoneal Surface Malignancies'],
      ['60', '#9b88cb', '', 'Ticagrelor Versus Prasugrel in Diabetic<br>Patients: a Pharmacodynamic Study'],
      ['6', '#f4f2fb', '', 'Δ9-THC (Namisol®) in Chronic Pancreatitis<br>Patients Suffering From Persistent<br>Abdominal Pain'],
      ['68', '#8d78c3', '', 'ß-SPECIFIC 4 Patients: Study of Pediatric<br>EffiCacy and Safety wIth FIrst-line Use of<br>Canakinumab'],
      ['41', '#bbafdc', '', 'ß-Cell Function and Glycemic Control in<br>Newly Diagnosed Type 2 Diabetic Patients<br>With Moderate Hyperglycemia']
    ];
    this.attachShadow({ mode: 'open' }).innerHTML = '<style>:host{display:block;margin-top:99px}.sup{font-size:21px;line-height:0;vertical-align:11px;letter-spacing:0}</style><table-toolbar></table-toolbar><table-head></table-head>'
      + rows.map(([p, c, f, t]) => `<trial-row p="${p}" tint="${c}" ${f}>${t}</trial-row>`).join('');
  }
});

define('inclinico-app', `:host{width:3840px;height:5729.500px;overflow:hidden;background:#f8f8f8}
.m{display:grid;grid-template-columns:1152px 2369px;gap:63px;padding-left:128px}.col{display:flex;flex-direction:column;gap:40px}.col.r{gap:32px}`, () => `
<app-header></app-header><disease-select>Respiratory system disease</disease-select>
<div class="m"><div class="col"><validation-card style="--in:185px">Quasi-prospective validation</validation-card><validation-card style="--in:254px">Prospective validation</validation-card></div>
<div class="col r"><trials-chart></trials-chart><trials-map></trials-map></div></div>
<search-link>Search Clinical Trials</search-link><filter-bar></filter-bar><trials-table></trials-table>`);
</script>
</body>
</html>
